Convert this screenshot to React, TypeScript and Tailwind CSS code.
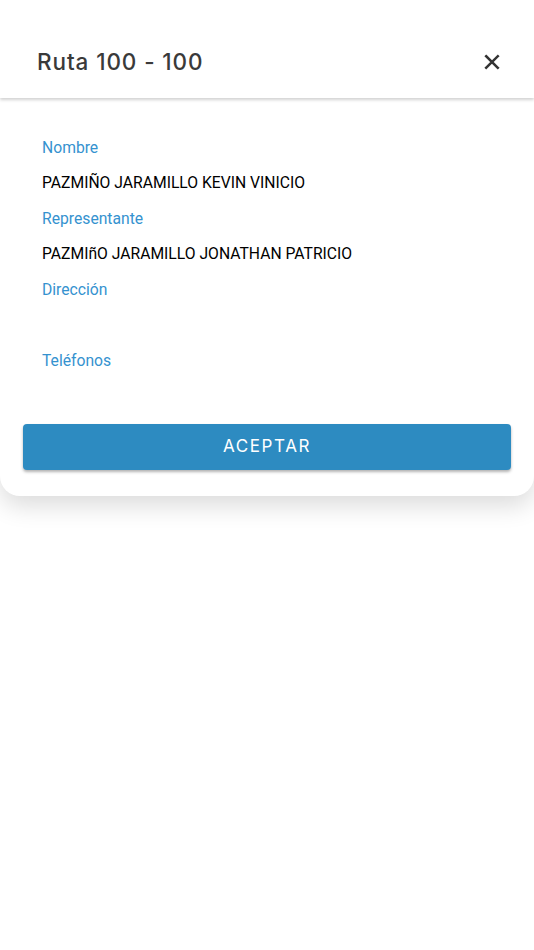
import React from "react";

const fields = [
  { label: "Nombre", value: "PAZMIÑO JARAMILLO KEVIN VINICIO" },
  { label: "Representante", value: "PAZMIñO JARAMILLO JONATHAN PATRICIO" },
  { label: "Dirección", value: "" },
  { label: "Teléfonos", value: "" },
];

export default function App() {
  return (
    <div className="min-h-[950px] w-full bg-white font-['Roboto',sans-serif]">
      <div className="rounded-b-[20px] bg-white shadow-[0_10px_24px_rgba(0,0,0,0.14)]">
        {/* Header */}
        <div className="flex h-[98px] items-center justify-between pl-[37px] pr-[32px] pt-[26px] shadow-[0_2px_3px_rgba(0,0,0,0.18)]">
          <h1 className="font-['Inter',sans-serif] text-[22.5px] font-medium tracking-[0.9px] text-[#3a3a3a]">
            Ruta 100 - 100
          </h1>
          <button className="text-[#333]">
            <svg width="20" height="20" viewBox="0 0 24 24" fill="none" stroke="currentColor" strokeWidth="3" strokeLinecap="square">
              <path d="M5 5L19 19M19 5L5 19" />
            </svg>
          </button>
        </div>

        {/* Body */}
        <div className="px-[42px] pt-[32px]">
          {fields.map((f) => (
            <div key={f.label}>
              <div className="flex h-[35px] items-center text-[15.7px] text-[#3592CF]">
                {f.label}
              </div>
              <div className="flex h-[36px] items-center text-[15.7px] text-black">
                {f.value}
              </div>
            </div>
          ))}
        </div>

        <div className="px-[23px] pb-[26px] pt-[10px]">
          <button className="h-[46px] w-full rounded-[4px] bg-[#2D8BC1] font-['Inter',sans-serif] text-[17px] tracking-[1.6px] text-white shadow-[0_2px_3px_rgba(0,0,0,0.3)]">
            ACEPTAR
          </button>
        </div>
      </div>
    </div>
  );
}
